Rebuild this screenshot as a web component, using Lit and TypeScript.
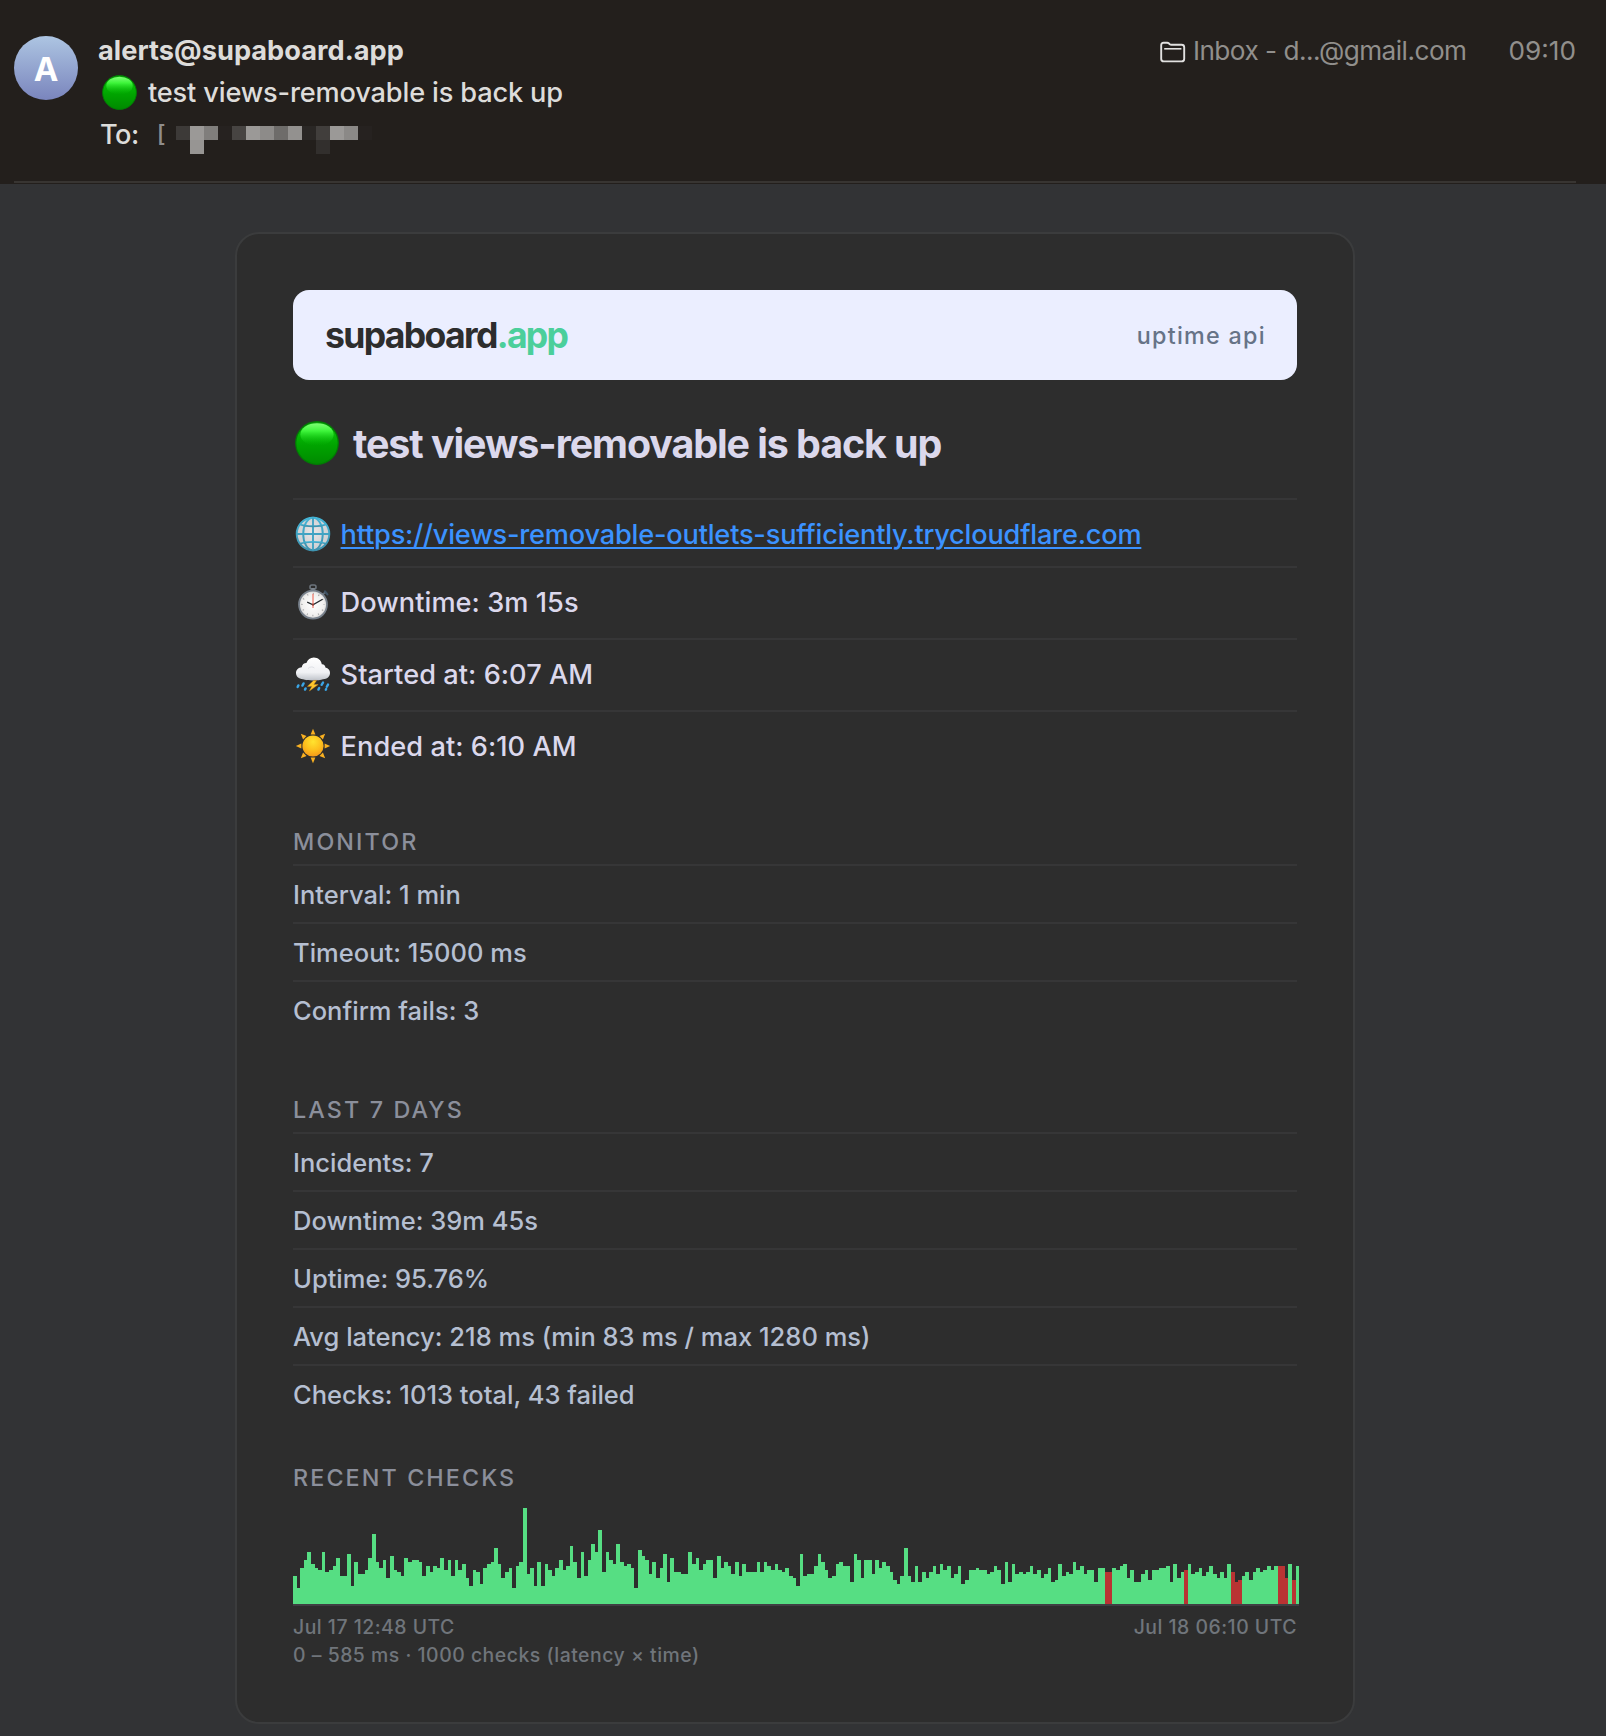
import { LitElement, html, css, svg } from "lit";
import { customElement, property } from "lit/decorators.js";
import { classMap } from "lit/directives/class-map.js";
import { styleMap } from "lit/directives/style-map.js";

const LATENCIES: number[] = [
  14, 8, 18, 22, 26, 20, 18, 17, 26, 16, 17, 19, 23, 14, 14, 25, 9, 21, 15, 15,
  17, 23, 35, 21, 18, 22, 13, 24, 17, 16, 14, 23, 21, 22, 22, 21, 14, 19, 16, 19,
  18, 23, 17, 22, 14, 22, 17, 20, 13, 9, 17, 16, 10, 18, 20, 21, 28, 20, 13, 16,
  18, 8, 19, 21, 48, 15, 18, 9, 21, 9, 20, 17, 14, 18, 22, 17, 19, 29, 21, 13,
  26, 14, 22, 30, 26, 37, 16, 26, 22, 20, 30, 21, 19, 20, 18, 8, 27, 24, 22, 15,
  21, 13, 18, 25, 11, 23, 16, 16, 15, 15, 26, 20, 23, 17, 20, 22, 22, 13, 24, 18,
  21, 19, 15, 21, 14, 20, 16, 16, 16, 21, 16, 21, 19, 17, 20, 17, 16, 18, 14, 13,
  9, 25, 14, 15, 15, 19, 25, 21, 17, 13, 14, 20, 21, 19, 19, 11, 25, 22, 13, 22,
  22, 15, 22, 18, 21, 19, 16, 12, 10, 14, 28, 14, 11, 19, 11, 16, 13, 16, 19, 15,
  20, 17, 19, 13, 15, 19, 10, 12, 17, 17, 18, 17, 17, 15, 16, 19, 17, 10, 21, 11,
  20, 15, 16, 15, 16, 19, 15, 17, 13, 15, 18, 11, 12, 20, 14, 16, 15, 21, 17, 19,
  15, 17, 17, 11, 18, 18, 16, 16, 18, 17, 19, 20, 13, 17, 11, 11, 15, 17, 12, 17,
  17, 18, 18, 19, 11, 20, 13, 16, 17, 20, 15, 16, 18, 14, 16, 19, 15, 13, 16, 13,
  20, 16, 11, 12, 14, 16, 12, 16, 18, 16, 17, 19, 17, 19, 19, 19, 13, 20, 12, 19,
];
const FAILED = new Set([226, 227, 248, 261, 262, 263, 274, 275, 276, 278]);

const MASK_TOP = ["#3d3a38", "#9b9997", "#807e7c", "#262220", "#474442", "#9b9997", "#8d8b89", "#6e6c6a", "#93918f", "#2a2725", "#413e3c", "#9b9997", "#8b8987", "#262220"];
const MASK_BOTTOM = ["", "#979593", "", "", "", "", "", "", "", "", "#322f2d", "", "", ""];

const greenDot = svg`
  <defs>
    <linearGradient id="g" x1="0" y1="0" x2="0" y2="1">
      <stop offset="0" stop-color="#0aa00a"/><stop offset=".3" stop-color="#06b806"/>
      <stop offset=".55" stop-color="#00a400"/><stop offset="1" stop-color="#008a00"/>
    </linearGradient>
    <linearGradient id="h" x1="0" y1="0" x2="0" y2="1">
      <stop offset="0" stop-color="#7dff74"/><stop offset=".35" stop-color="#3df53a"/>
      <stop offset="1" stop-color="#04b404" stop-opacity="0"/>
    </linearGradient>
  </defs>
  <circle cx="18" cy="18" r="17.4" fill="url(#g)" stroke="#017d03" stroke-width="1"/>
  <ellipse cx="18" cy="11" rx="13.6" ry="9.2" fill="url(#h)"/>`;

const globe = svg`
  <defs>
    <radialGradient id="w" cx=".5" cy=".45" r=".6">
      <stop offset="0" stop-color="#eae6e6"/><stop offset="1" stop-color="#c6cbcf"/>
    </radialGradient>
    <linearGradient id="b" x1="0" y1="0" x2="0" y2="1">
      <stop offset="0" stop-color="#43b4d6"/><stop offset="1" stop-color="#3e92ae"/>
    </linearGradient>
  </defs>
  <circle cx="18" cy="18" r="16.5" fill="url(#w)"/>
  <g fill="none" stroke="url(#b)" stroke-width="1.9">
    <circle cx="18" cy="18" r="16.3"/>
    <ellipse cx="18" cy="18" rx="9.8" ry="16.3"/>
    <path d="M18 1.7 L18.01 34.3" stroke="#41a3c3"/>
    <path d="M1.7 18 L34.3 18.01" stroke="#41a3c3"/>
    <path d="M4.8 8.2 C11 11 25 11 31.2 8.2"/>
    <path d="M4.8 27.8 C11 25.2 25 25.2 31.2 27.8"/>
  </g>`;

const stopwatch = svg`
  <defs>
    <radialGradient id="f" cx=".5" cy=".5" r=".5">
      <stop offset="0" stop-color="#ffffff"/><stop offset=".8" stop-color="#f0efee"/><stop offset="1" stop-color="#cfcfd0"/>
    </radialGradient>
  </defs>
  <rect x="15" y="1" width="6" height="4" rx="1.8" fill="none" stroke="#6c747c" stroke-width="1.6"/>
  <rect x="16.2" y="4" width="3.6" height="3" fill="#7d858d"/>
  <path d="M27.5 10.5 L31 8" stroke="#5d6873" stroke-width="2"/>
  <path d="M30 7.3 L32.4 10.4" stroke="#3f5263" stroke-width="2.2" stroke-linecap="round"/>
  <circle cx="18" cy="20.6" r="14" fill="url(#f)" stroke="#77808b" stroke-width="1.8"/>
  <circle cx="18" cy="20.6" r="11" fill="none" stroke="#a3a3a4" stroke-width="1.5" stroke-dasharray="1 4.76" stroke-dashoffset=".5"/>
  <path d="M12.2 18.2 L18 20.8 L27.6 15.2" fill="none" stroke="#23282c" stroke-width="1.3"/>
  <path d="M18 9.8 L18 24" stroke="#ee5a4a" stroke-width="1"/>
  <circle cx="18" cy="20.6" r="1.1" fill="#8e3a32"/>`;

const storm = svg`
  <defs>
    <linearGradient id="c" x1="0" y1="0" x2="0" y2="1">
      <stop offset="0" stop-color="#ffffff"/><stop offset=".65" stop-color="#f0f1f4"/><stop offset="1" stop-color="#bfc3ca"/>
    </linearGradient>
  </defs>
  <path d="M8 23.2 C3.6 23 1 20.4 1 17 C1 13.6 3.6 11.4 6.8 11.2 C7 8.6 9 7 11.4 7 C12.6 3.8 15.2 1.6 18.8 1.6 C23 1.6 26.2 4.4 26.8 8.2 C28.8 8 30.4 9.6 30.4 11.6 C33.4 12.2 35 14.2 35 17 C35 20.8 32 23 28 23.2 C24 24.8 12 24.8 8 23.2Z" fill="url(#c)"/>
  <path d="M13 12.6 C14.6 10.6 17.6 10.4 19.4 12" fill="none" stroke="#dfe1e6" stroke-width="1"/>
  <path d="M18.6 24.4 L12.4 30.4 L16.8 30.2 L14.4 35 L23.2 28.6 L18.8 28.6 L21.6 24.4Z" fill="#fdc62b" stroke="#d9931b" stroke-width=".4"/>
  <g stroke="#3aa5e6" stroke-width="2.4" stroke-linecap="round">
    <path d="M3.4 29.4 L2.6 31"/><path d="M8.6 27.4 L7.4 29.6"/><path d="M10.6 32.4 L10 33.6"/>
    <path d="M28 26.6 L26.6 28.8"/><path d="M33 28.6 L31.8 30.8"/><path d="M24.2 32 L23.4 33.6"/><path d="M31.2 33 L30.8 33.8"/>
  </g>`;

const sun = svg`
  <defs>
    <radialGradient id="s" cx=".5" cy=".3" r=".7">
      <stop offset="0" stop-color="#ffe32f"/><stop offset=".6" stop-color="#fdbd1c"/><stop offset="1" stop-color="#f59a1a"/>
    </radialGradient>
  </defs>
  <g fill="#f9b021">
    ${[0, 45, 90, 135, 180, 225, 270, 315].map(
      (a) => svg`<path transform="rotate(${a} 18 18)" d="M18 .8 L20.4 6.4 L15.6 6.4Z"/>`
    )}
  </g>
  <circle cx="18" cy="18" r="10.6" fill="url(#s)"/>`;

const ICONS: Record<string, unknown> = { dot: greenDot, globe, stopwatch, storm, sun };

@customElement("status-icon")
class StatusIcon extends LitElement {
  @property() name = "dot";
  static styles = css`
    :host { display: block; flex: none; }
    .glyph { display: block; width: 100%; height: 100%; }
  `;
  render() {
    return html`<svg class="glyph" viewBox="0 0 36 36">${ICONS[this.name]}</svg>`;
  }
}

@customElement("latency-chart")
class LatencyChart extends LitElement {
  static styles = css`
    :host { display: block; }
    .chart { display: flex; align-items: flex-end; width: 1006px; height: 96px; border-bottom: 2px solid #3f3f43; }
    .bar { flex: 1 1 0; min-width: 0; background: #56de83; }
    .bar.failed { background: #b93333; }
  `;
  render() {
    return html`<div class="chart">
      ${LATENCIES.map(
        (v, i) => html`<div class=${classMap({ bar: true, failed: FAILED.has(i) })} style=${styleMap({ height: `${v * 2}px` })}></div>`
      )}
    </div>`;
  }
}

@customElement("detail-section")
class DetailSection extends LitElement {
  @property() heading = "";
  @property({ attribute: false }) rows: string[] = [];
  static styles = css`
    :host { display: block; }
    .heading { height: 29px; line-height: 29px; padding-bottom: 8px; font-size: 23.3px; letter-spacing: 2.12px; color: #8b8f9b; text-transform: uppercase; }
    .row { box-sizing: border-box; height: 58px; border-top: 2px solid #363637; padding-top: 1px; line-height: 56px; font-size: 25.5px; letter-spacing: 0.01px; color: #b5bfd1; }
  `;
  render() {
    return html`<div class="heading">${this.heading}</div>
      ${this.rows.map((r) => html`<div class="row">${r}</div>`)}`;
  }
}

@customElement("app-root")
class AppRoot extends LitElement {
  static styles = css`
    :host { display: block; min-height: 1736px; background: #323335; font-family: Inter, "Liberation Sans", sans-serif; font-size: 27.2px; font-weight: 450; overflow: hidden; }
    .head { height: 184px; background: #231f1c; overflow: hidden; }
    .head-inner { box-sizing: border-box; height: 183px; margin: 0 30px 0 14px; border-bottom: 2px solid #383532; display: flex; align-items: flex-start; padding-top: 30px; line-height: 42px; color: #dddcda; }
    .avatar { width: 64px; height: 64px; margin-top: 6px; border-radius: 50%; background: linear-gradient(#adc5e2, #7a85bd); color: #fff; font-size: 33px; font-weight: 700; line-height: 66px; text-align: center; }
    .lines { margin-left: 20px; flex: 1; }
    .sender { font-weight: 650; letter-spacing: 0.02px; }
    .subject { display: flex; align-items: center; height: 42px; padding-left: 4px; letter-spacing: -0.17px; }
    .subject-dot { width: 35px; height: 35px; margin: -2px 11px 0 0; }
    .to { display: flex; padding-left: 2px; letter-spacing: -0.5px; }
    .bracket { margin-left: 18px; width: 19.6px; color: #8f8d8b; font-size: 24px; line-height: 40px; }
    .mask { display: grid; grid-template-columns: repeat(14, 14px); grid-auto-rows: 14px; margin-top: 12px; }
    .meta { display: flex; font-size: 26.2px; font-weight: 400; color: #918f8c; }
    .folder { width: 26px; height: 22px; margin: 11px 7px 0 0; }
    .mailbox { letter-spacing: -0.52px; margin-right: 42px; }
    .card { box-sizing: border-box; width: 1120px; height: 1492px; margin: 48px 0 0 235px; border: 2px solid #3b3c3d; border-radius: 24px; background: #2d2d2d; padding: 56px; }
    .brand { display: flex; align-items: center; justify-content: space-between; height: 90px; padding: 0 31px 0 32px; border-radius: 16px; background: #ebeeff; }
    .logo { font-size: 35.6px; font-weight: 700; letter-spacing: -1.68px; color: #2d2d2d; }
    .tld { color: #4bcf9b; }
    .product { font-size: 23.3px; letter-spacing: 1.3px; color: #667387; }
    .title { display: flex; align-items: center; margin: 0; height: 48px; padding: 39px 0 31px 2px; font-size: 39.4px; font-weight: 700; letter-spacing: -1.08px; color: #dbd8ec; }
    .title-dot { width: 44px; height: 44px; margin-right: 14px; }
    .title-text { padding-top: 2px; }
    .fact { box-sizing: border-box; display: flex; align-items: center; height: 72px; border-top: 2px solid #363637; padding: 0 0 2px 1.6px; letter-spacing: 0.04px; color: #dbd8ec; }
    .fact.first { height: 68px; padding: 1px 0 0 1.6px; letter-spacing: -0.21px; }
    .fact-icon { width: 36px; height: 36px; margin-right: 10px; }
    .link { padding-top: 1px; color: #3b92ff; text-decoration: underline; text-decoration-thickness: 2px; text-underline-offset: 3px; }
    .monitor { margin-top: 45px; }
    .week { margin-top: 57px; }
    .recent { margin-top: 41px; margin-bottom: 8px; }
    .axis { display: flex; justify-content: space-between; padding-top: 7px; }
    .axis, .caption { font-size: 19.4px; line-height: 28px; letter-spacing: 0.5px; color: #70757b; }
    .caption { letter-spacing: 0.52px; }
  `;
  render() {
    return html`
      <header class="head">
        <div class="head-inner">
          <div class="avatar">A</div>
          <div class="lines">
            <div class="sender">alerts@supaboard.app</div>
            <div class="subject"><status-icon class="subject-dot" name="dot"></status-icon>test views-removable is back up</div>
            <div class="to">
              <span>To:</span><span class="bracket">[</span>
              <div class="mask">
                ${[...MASK_TOP, ...MASK_BOTTOM].map((c) => html`<i style=${styleMap({ background: c || "transparent" })}></i>`)}
              </div>
            </div>
          </div>
          <div class="meta">
            <svg class="folder" viewBox="0 0 26 22" fill="none" stroke="#e2e1e0" stroke-width="1.9" stroke-linejoin="round">
              <path d="M1.2 18 V4.2 Q1.2 1.8 3.6 1.8 H7.2 Q8.2 1.8 9 2.5 L9.8 3.2 Q10.4 3.7 11.4 3.7 H21.6 Q24.2 3.7 24.2 6.2 V18 Q24.2 20.4 21.6 20.4 H3.8 Q1.2 20.4 1.2 18Z"/>
              <path d="M4.2 7.8 H21.4" stroke-width="1.6"/>
            </svg>
            <span class="mailbox">Inbox - d...@gmail.com</span>
            <span>09:10</span>
          </div>
        </div>
      </header>
      <main class="card">
        <div class="brand">
          <div class="logo">supaboard<span class="tld">.app</span></div>
          <div class="product">uptime api</div>
        </div>
        <h1 class="title"><status-icon class="title-dot" name="dot"></status-icon><span class="title-text">test views-removable is back up</span></h1>
        <div class="fact first"><status-icon class="fact-icon" name="globe"></status-icon><span class="link">https://views-removable-outlets-sufficiently.trycloudflare.com</span></div>
        <div class="fact"><status-icon class="fact-icon" name="stopwatch"></status-icon>Downtime: 3m 15s</div>
        <div class="fact"><status-icon class="fact-icon" name="storm"></status-icon>Started at: 6:07 AM</div>
        <div class="fact"><status-icon class="fact-icon" name="sun"></status-icon>Ended at: 6:10 AM</div>
        <detail-section class="monitor" heading="Monitor" .rows=${["Interval: 1 min", "Timeout: 15000 ms", "Confirm fails: 3"]}></detail-section>
        <detail-section class="week" heading="Last 7 days" .rows=${["Incidents: 7", "Downtime: 39m 45s", "Uptime: 95.76%", "Avg latency: 218 ms (min 83 ms / max 1280 ms)", "Checks: 1013 total, 43 failed"]}></detail-section>
        <detail-section class="recent" heading="Recent checks"></detail-section>
        <latency-chart></latency-chart>
        <div class="axis"><span>Jul 17 12:48 UTC</span><span>Jul 18 06:10 UTC</span></div>
        <div class="caption">0 – 585 ms · 1000 checks (latency × time)</div>
      </main>
    `;
  }
}
